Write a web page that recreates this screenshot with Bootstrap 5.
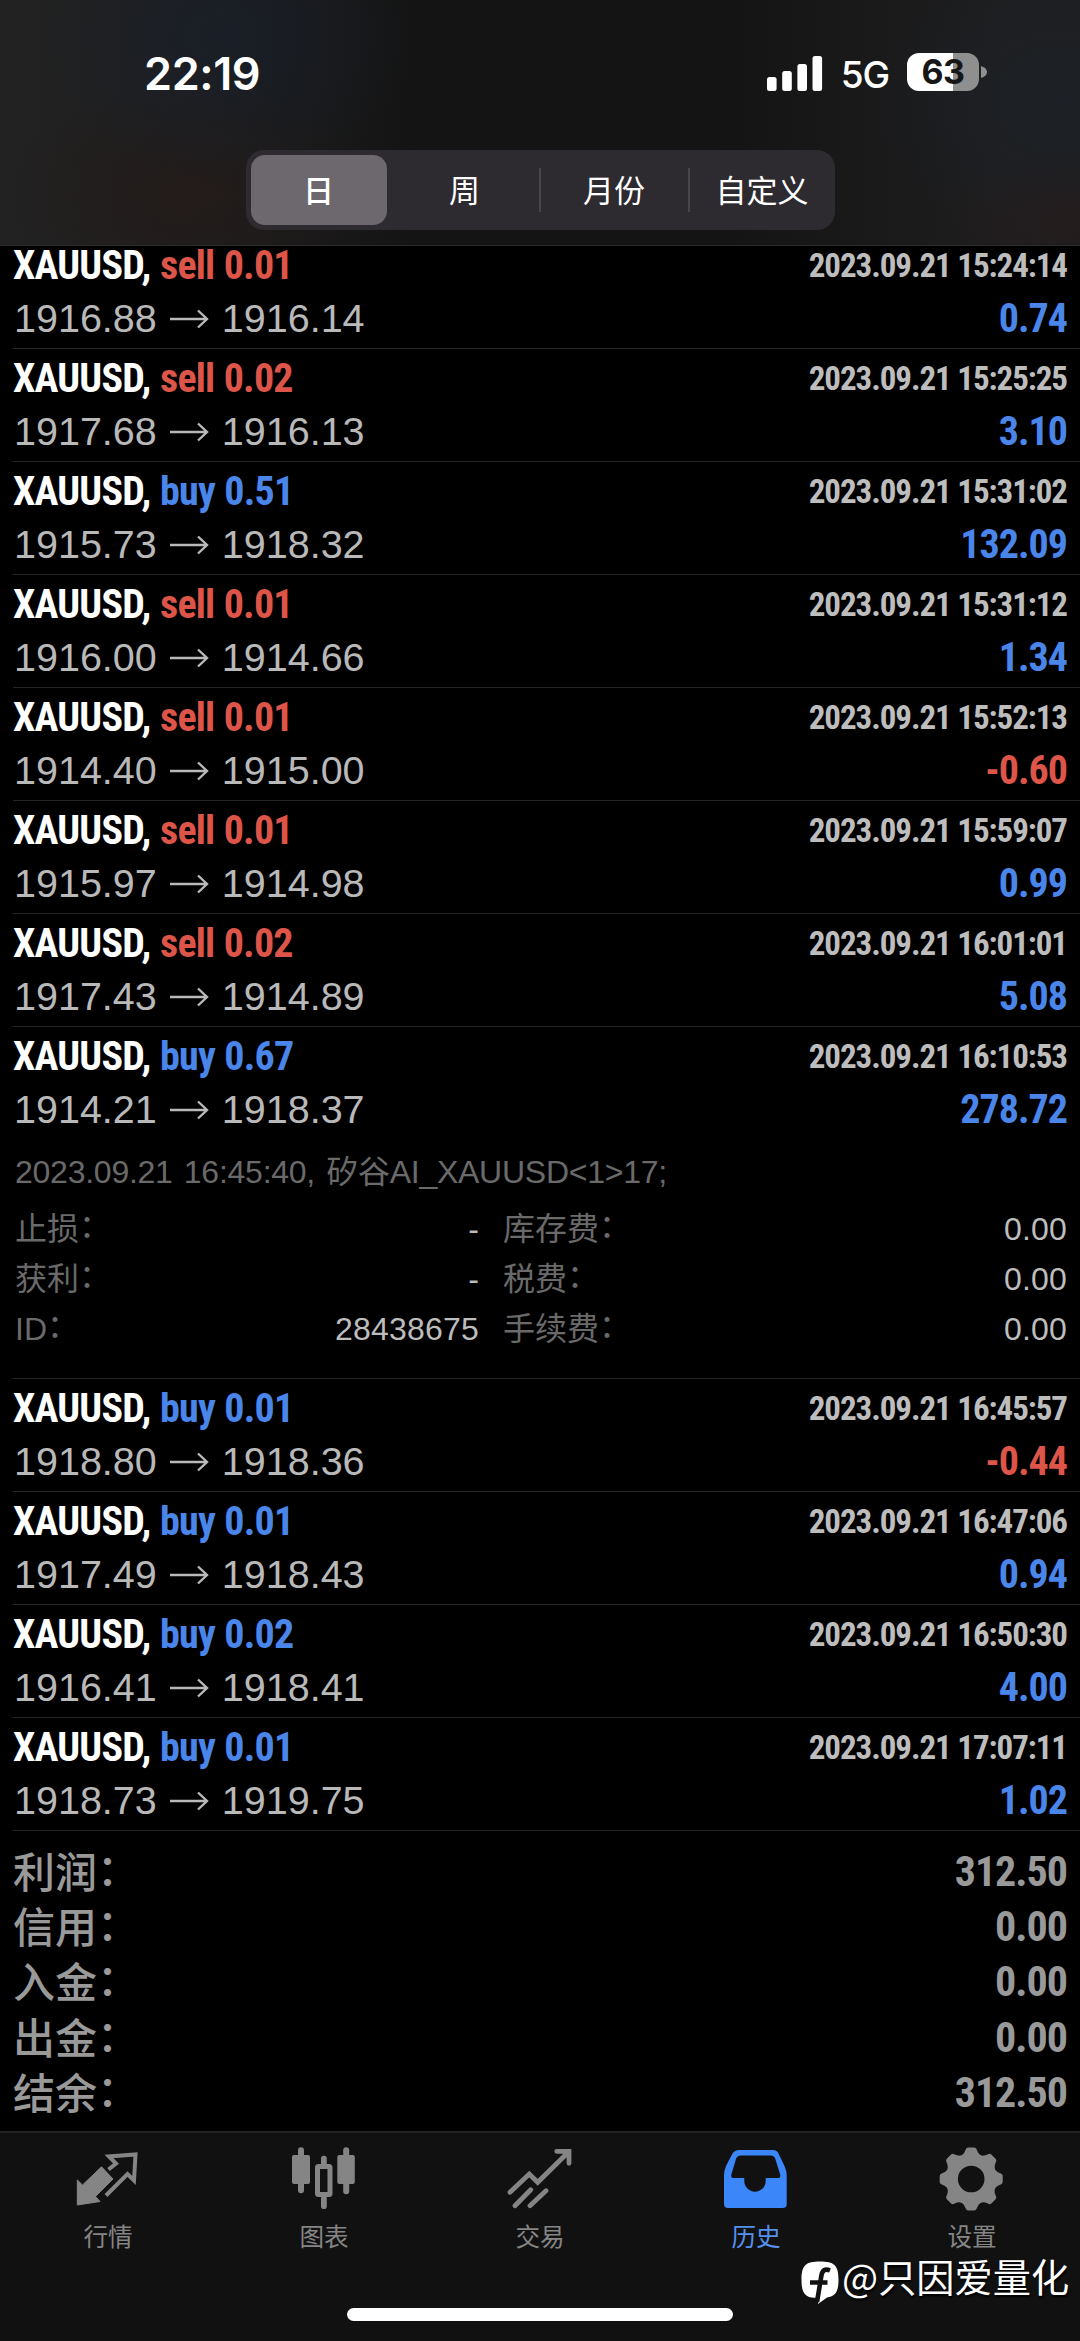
<!DOCTYPE html>
<html lang="zh-CN" data-bs-theme="dark">
<head>
<meta charset="utf-8">
<meta name="viewport" content="width=device-width, initial-scale=1">
<title>历史</title>
<link href="https://cdn.jsdelivr.net/npm/bootstrap@5.3.0/dist/css/bootstrap.min.css" rel="stylesheet">
<style>
  body { background: #000; font-family: "Liberation Sans", "Noto Sans CJK SC", sans-serif; width: 1080px; height: 2341px; overflow: hidden; }
  .screen { height: 2341px; }
  .cond { font-family: "Roboto Condensed", Roboto, "Liberation Sans", sans-serif; font-stretch: 75%; font-weight: 700; }
  .colon { vertical-align: 3px; line-height: 1; }

  /* top area */
  .topbar {
    height: 246px; z-index: 2; border-bottom: 1px solid #2b2b2b;
    background:
      radial-gradient(ellipse 190px 150px at 225px 35px, rgba(24,32,46,.6), transparent),
      radial-gradient(ellipse 190px 110px at 185px 195px, rgba(36,27,25,.8), transparent),
      radial-gradient(ellipse 190px 150px at 1060px 100px, rgba(28,34,42,.6), transparent),
      radial-gradient(ellipse 150px 60px at 1080px 215px, rgba(40,27,26,.7), transparent),
      linear-gradient(90deg, #222 0, #1d1d1d 220px, #141414 420px, #141414 720px, #1e1e1f 1000px);
  }
  .statusbar { height: 150px; padding: 48px 92px 0 144px; }
  .clock { font: 600 45px/52px Inter, sans-serif; letter-spacing: -.4px; }
  .net { font: 500 37px/46px Inter, sans-serif; margin: 4px 18px 0 18px; letter-spacing: -1.2px; }
  .batt { width: 72px; height: 38px; margin-top: 5px; border-radius: 12px; background: linear-gradient(90deg, #fff 64%, #8f8f8f 64%); color: #161616; font: 700 34px/38px Inter, sans-serif; letter-spacing: -.5px; }
  .segments { width: 589px; height: 80px; border-radius: 18px; background: #2d2a30; padding: 5px; font-size: 31px; font-family: "Noto Sans CJK SC", sans-serif; }
  .segments .seg { width: 147px; height: 70px; line-height: 67px; color: #fff; }
  .segments .seg.active { width: 136px; background: #6c686d; border-radius: 14px; font-weight: 500; }
  .segments .seg.wk { width: 152px; padding-left: 4px; }
  .segments .seg.custom { width: 140px; padding-left: 5px; }
  .segments .bar { width: 2px; height: 44px; background: #48464b; }

  /* deals */
  .deals { margin-top: -10px; padding-left: 13px; }
  .deal { height: 113px; padding: 3px 13px 0 0; border-bottom: 1px solid #262626; }
  .deal.open { height: 352px; }
  .ln { height: 53px; line-height: 53px; white-space: nowrap; }
  .sym { font-size: 40px; letter-spacing: -.8px; color: #fff; word-spacing: 1px; }
  .when { font-size: 33px; color: #bdbdbd; letter-spacing: -1.05px; }
  .px { font-size: 39.5px; color: #b9b9b9; padding-left: 1px; }
  .px svg { width: 40px; height: 26px; margin: 0 13px 0 12px; }
  .amt { font-size: 40px; letter-spacing: -1px; }
  .up { color: #4a86ea; } .down { color: #dc5548; }
  .note { margin-top: 11px; font-size: 32px; line-height: 50px; color: #6a6a6a; padding-left: 2px; white-space: nowrap; letter-spacing: -.25px; word-spacing: 2.500px; }
  .info { margin-top: 7px; font-size: 32px; color: #6a6a6a; padding-left: 2px; }
  .info .d-flex { height: 50px; line-height: 50px; }
  .info .val { color: #bdbdbd; letter-spacing: .2px; }
  .info .left-half { width: 464px; margin-right: 24px; }

  /* totals */
  .totals { padding: 12px 13px 0 13px; height: 300px; color: #999; }
  .totals .d-flex { height: 55.2px; line-height: 55.2px; }
  .totals .name { font-size: 42px; font-weight: 500; font-family: "Noto Sans CJK SC", sans-serif; margin-top: -1px; }
  .totals .cond { font-size: 42px; letter-spacing: -1px; margin-top: 1px; }

  /* tabs */
  .tabs { height: 210px; background: #111; border-top: 2px solid #242424; }
  .tabs .tab { width: 216px; color: #858585; padding: 11px 0 0; font-size: 24.6px; }
  .tabs .tab.active { color: #5590ee; }
  .tabs .tab svg { width: 70px; height: 68px; }
  .tabs .tab span { line-height: 30px; margin-top: 8px; font-family: "Noto Sans CJK SC", sans-serif; }
  .home { width: 386px; height: 13px; left: 347px; top: 2308px; border-radius: 7px; background: #fff; }
  .credit { left: 800px; top: 2248px; font: 400 38.2px/56px "Noto Sans CJK SC", sans-serif; color: #fff; text-shadow: 1px 2px 2px #000; white-space: nowrap; }
  .credit svg { width: 42px; height: 46px; margin-top: 12px; }
</style>
<script src="https://cdn.jsdelivr.net/npm/bootstrap@5.3.0/dist/js/bootstrap.bundle.min.js"></script>
</head>
<body>
<svg class="d-none">
  <symbol id="arr" viewBox="0 0 40 26"><path d="M1 13H38M29 4.500L38 13L29 21.500" fill="none" stroke="#b9b9b9" stroke-width="2.400"/></symbol>
</svg>
<div class="screen d-flex flex-column position-relative">
  <header class="topbar position-relative flex-shrink-0">
    <div class="statusbar d-flex justify-content-between align-items-start">
      <div class="clock text-white">22:19</div>
      <div class="d-flex align-items-start text-white">
        <svg width="56" height="36" viewBox="0 0 56 36" class="mt-2" fill="#fff"><rect x="0" y="21" width="9.600" height="14" rx="2.500"/><rect x="15.200" y="15" width="9.600" height="20" rx="2.500"/><rect x="30.400" y="8" width="9.600" height="27" rx="2.500"/><rect x="45.500" y="0" width="9.600" height="35" rx="2.500"/></svg>
        <div class="net">5G</div>
        <div class="batt text-center">63</div>
        <svg width="9" height="38" viewBox="0 0 9 38" class="mt-1"><path d="M2 14Q8 16 8 20Q8 24 2 26Z" fill="#8f8f8f"/></svg>
      </div>
    </div>
    <div class="segments d-flex align-items-center mx-auto">
      <div class="seg active text-center flex-shrink-0">日</div>
      <div class="seg wk text-center flex-shrink-0">周</div><i class="bar"></i>
      <div class="seg text-center flex-shrink-0">月份</div><i class="bar"></i>
      <div class="seg custom text-center flex-shrink-0">自定义</div>
    </div>
  </header>

  <main class="deals flex-shrink-0" id="deals"></main>

  <section class="totals flex-shrink-0">
    <div class="d-flex justify-content-between"><span class="name">利润<span class="colon">：</span></span><span class="cond">312.50</span></div>
    <div class="d-flex justify-content-between"><span class="name">信用<span class="colon">：</span></span><span class="cond">0.00</span></div>
    <div class="d-flex justify-content-between"><span class="name">入金<span class="colon">：</span></span><span class="cond">0.00</span></div>
    <div class="d-flex justify-content-between"><span class="name">出金<span class="colon">：</span></span><span class="cond">0.00</span></div>
    <div class="d-flex justify-content-between"><span class="name">结余<span class="colon">：</span></span><span class="cond">312.50</span></div>
  </section>

  <nav class="tabs d-flex flex-shrink-0">
    <div class="tab d-flex flex-column align-items-center">
      <svg viewBox="0 0 70 68"><path d="M4.300 36L9.500 41L28.500 22.800L40 35L22.500 52.500L27 57.500L4.300 61Z" fill="currentColor" stroke="currentColor" stroke-linejoin="round"/><path d="M35.500 25.500L43 19.500L36 12.500L62.500 10.500L61 36.500L54.500 30L33 51.500" fill="none" stroke="currentColor" stroke-width="4"/></svg>
      <span>行情</span>
    </div>
    <div class="tab d-flex flex-column align-items-center">
      <svg viewBox="0 0 70 68" fill="currentColor"><rect x="3" y="11" width="18" height="29" rx="2"/><rect x="9" y="3.300" width="6" height="46" rx="3"/><rect x="28.500" y="22.500" width="12.500" height="28" rx="1" fill="none" stroke="currentColor" stroke-width="5"/><rect x="32" y="11.700" width="5.800" height="11" rx="2.800"/><rect x="32" y="51" width="5.800" height="14" rx="2.800"/><rect x="48.300" y="11" width="17.500" height="29" rx="2"/><rect x="54.200" y="3.300" width="6" height="47" rx="3"/></svg>
      <span>图表</span>
    </div>
    <div class="tab d-flex flex-column align-items-center">
      <svg viewBox="0 0 70 68" fill="none" stroke="currentColor" stroke-width="4.800" stroke-linecap="round"><path d="M5 48.300L24.300 30L32.700 38.300L63 8.500M51.700 7.300H64V19.300M10 61.700L25.700 45.700M25 61.700L41 46.700"/></svg>
      <span>交易</span>
    </div>
    <div class="tab active d-flex flex-column align-items-center">
      <svg viewBox="0 0 70 68"><path fill="#3b86f8" fill-rule="evenodd" d="M18 6H52Q56 6 57.500 9.500L63.500 22Q65.700 27 65.700 31V60Q65.700 64 61.700 64H7Q3 64 3 60V31Q3 27 5 22L11.500 9.500Q13.500 6 18 6ZM19.500 11.500Q16.500 11.500 15.300 14L10.500 30Q9.500 34 12 34H23.300V37A10.700 10.700 0 0 0 44.700 37V34H57.500Q60 34 59 30L54 14Q53 11.500 50 11.500Z"/></svg>
      <span>历史</span>
    </div>
    <div class="tab d-flex flex-column align-items-center">
      <svg viewBox="0 0 70 68"><g transform="translate(34.200 35)" fill="currentColor"><circle r="19.500" fill="none" stroke="currentColor" stroke-width="12.400"/><path id="t" d="M-9.500-23.500Q-6.500-26-5.500-29.500Q-4.800-31.500-3-31.500H3Q4.800-31.500 5.500-29.500Q6.500-26 9.500-23.500Z"/><use href="#t" transform="rotate(45)"/><use href="#t" transform="rotate(90)"/><use href="#t" transform="rotate(135)"/><use href="#t" transform="rotate(180)"/><use href="#t" transform="rotate(225)"/><use href="#t" transform="rotate(270)"/><use href="#t" transform="rotate(315)"/></g></svg>
      <span>设置</span>
    </div>
  </nav>

  <div class="home position-absolute"></div>
  <div class="credit position-absolute d-flex align-items-start">
    <svg viewBox="0 0 42 46"><path d="M20 1.500C34 1.500 38.500 5 38.500 19.500C38.500 31 36 36 27 37.500L18 44L18.500 38C5 38 1.500 34 1.500 19.500C1.500 5 6 1.500 20 1.500Z" fill="#fff"/><path d="M30 10.500Q23 7.500 21.500 15L17 42M10 22.500H27.500" fill="none" stroke="#111" stroke-width="4.600"/></svg>
    <span>@只因爱量化</span>
  </div>
</div>
<script>
  const deals = [
    ["sell 0.01", "15:24:14", "1916.88", "1916.14", "0.74"],
    ["sell 0.02", "15:25:25", "1917.68", "1916.13", "3.10"],
    ["buy 0.51", "15:31:02", "1915.73", "1918.32", "132.09"],
    ["sell 0.01", "15:31:12", "1916.00", "1914.66", "1.34"],
    ["sell 0.01", "15:52:13", "1914.40", "1915.00", "-0.60"],
    ["sell 0.01", "15:59:07", "1915.97", "1914.98", "0.99"],
    ["sell 0.02", "16:01:01", "1917.43", "1914.89", "5.08"],
    ["buy 0.67", "16:10:53", "1914.21", "1918.37", "278.72", true],
    ["buy 0.01", "16:45:57", "1918.80", "1918.36", "-0.44"],
    ["buy 0.01", "16:47:06", "1917.49", "1918.43", "0.94"],
    ["buy 0.02", "16:50:30", "1916.41", "1918.41", "4.00"],
    ["buy 0.01", "17:07:11", "1918.73", "1919.75", "1.02"]
  ];
  const label = s => `<span>${s}<span class="colon">：</span></span>`;
  const pair = (a, b, c, d) => `<div class="d-flex"><div class="left-half d-flex justify-content-between">${label(a)}<span class="val">${b}</span></div><div class="d-flex flex-grow-1 justify-content-between">${label(c)}<span class="val">${d}</span></div></div>`;
  const details = `<div class="note">2023.09.21 16:45:40, 矽谷AI_XAUUSD&lt;1&gt;17;</div><div class="info">${pair("止损", "-", "库存费", "0.00")}${pair("获利", "-", "税费", "0.00")}${pair("ID", "28438675", "手续费", "0.00")}</div>`;
  document.getElementById("deals").innerHTML = deals.map(([op, t, a, b, v, open]) => `
    <article class="deal ${open ? "open" : ""}">
      <div class="ln d-flex justify-content-between"><span class="cond sym">XAUUSD, <span class="${op[0] === "s" ? "down" : "up"}">${op}</span></span><span class="cond when">2023.09.21 ${t}</span></div>
      <div class="ln d-flex justify-content-between"><span class="px d-flex align-items-center">${a}<svg><use href="#arr"/></svg>${b}</span><span class="cond amt ${v[0] === "-" ? "down" : "up"}">${v}</span></div>
      ${open ? details : ""}
    </article>`).join("");
</script>
</body>
</html>
